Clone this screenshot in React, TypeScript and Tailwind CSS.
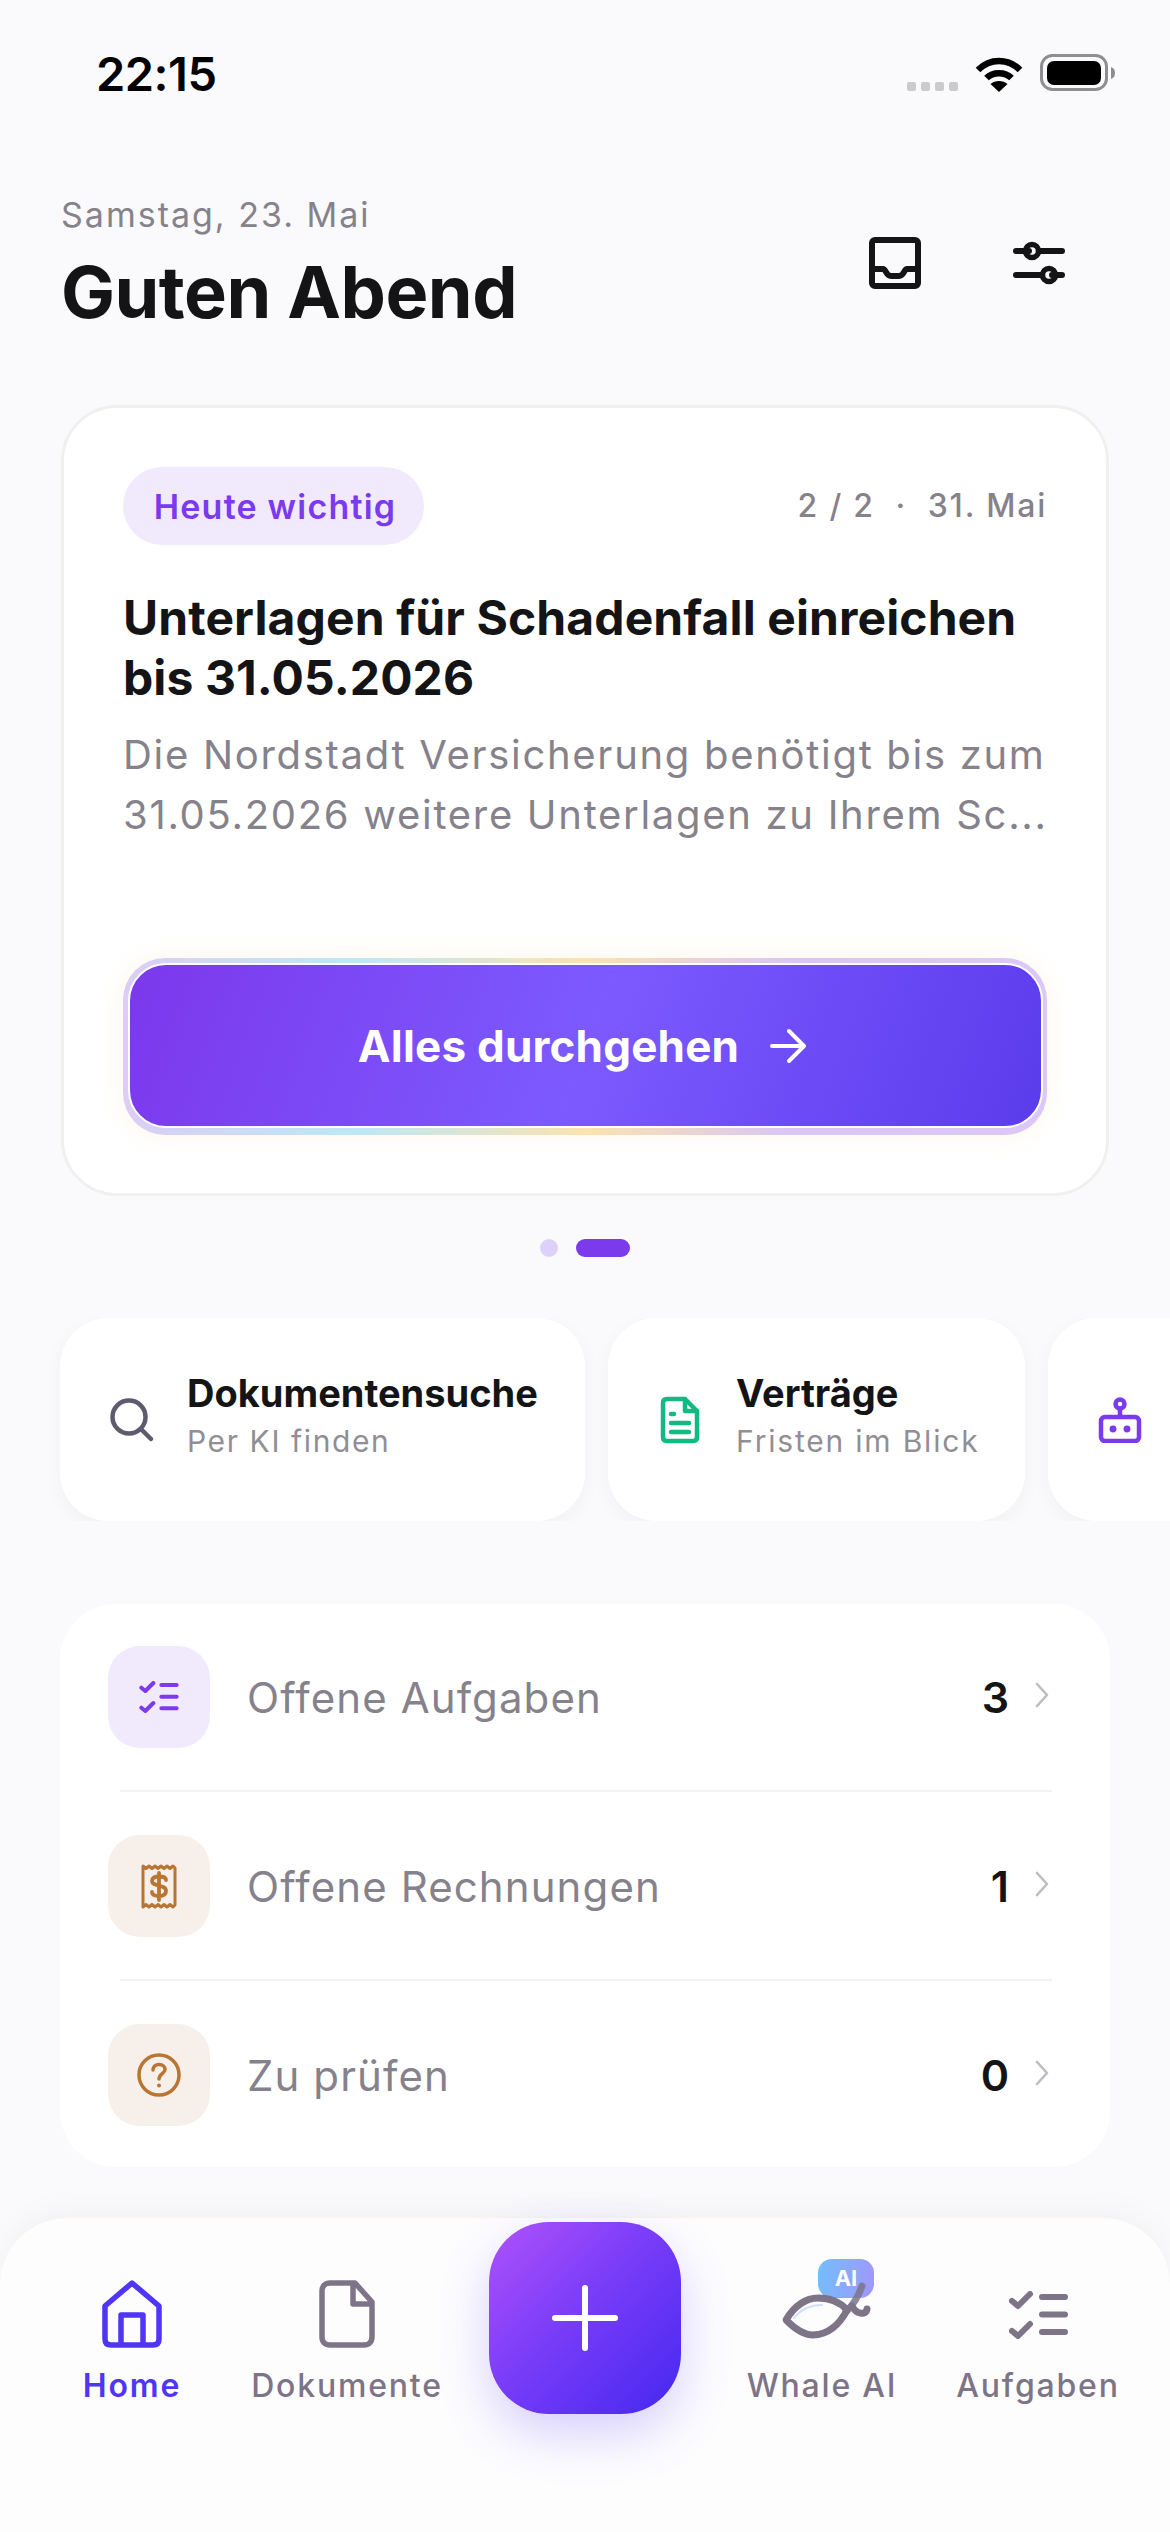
import React from "react";

const font = { fontFamily: "Inter, 'Noto Sans', sans-serif" };

function Wifi() {
  return (
    <svg width="48" height="36" viewBox="0 0 48 36" fill="none" stroke="#000" strokeWidth="6.5">
      <path d="M3 14 C15 2 33 2 45 14" />
      <path d="M11.5 22 C18 15.5 30 15.5 36.5 22" />
      <path d="M24 36 L15.5 28 C20 24 28 24 32.5 28 Z" fill="#000" stroke="none" />
    </svg>
  );
}

function Battery() {
  return (
    <svg width="76" height="38" viewBox="0 0 76 38" fill="none">
      <rect x="1.5" y="1.5" width="65" height="34" rx="11" stroke="#8e8e90" strokeWidth="3" />
      <rect x="7" y="7" width="54" height="24" rx="7" fill="#000" />
      <path d="M71 13 C74 14 75 16 75 19 C75 22 74 24 71 25 Z" fill="#8e8e90" />
    </svg>
  );
}

function Inbox() {
  return (
    <svg width="52" height="52" viewBox="0 0 52 52" fill="none" stroke="#141416" strokeWidth="6" strokeLinejoin="round">
      <rect x="3" y="3" width="46" height="46" rx="3" />
      <path d="M3 32 H14 C17 32 17 39 22 39 H30 C35 39 35 32 38 32 H49" />
    </svg>
  );
}

function Sliders() {
  return (
    <svg width="52" height="46" viewBox="0 0 52 46" fill="none" stroke="#141416" strokeWidth="6" strokeLinecap="round">
      <path d="M3 11 H16 M27 11 H49 M3 35 H28 M39 35 H49" />
      <circle cx="19" cy="11" r="6.5" strokeWidth="5.5" />
      <circle cx="36" cy="35" r="6.5" strokeWidth="5.5" />
    </svg>
  );
}

function SearchIcon() {
  return (
    <svg width="46" height="46" viewBox="0 0 46 46" fill="none" stroke="#5f5a6e" strokeWidth="4.5" strokeLinecap="round">
      <circle cx="20" cy="20" r="16.5" />
      <path d="M32 32 L42 42" />
    </svg>
  );
}

function ContractIcon() {
  return (
    <svg width="40" height="48" viewBox="0 0 40 48" fill="none" stroke="#12b981" strokeWidth="4.5" strokeLinecap="round" strokeLinejoin="round">
      <path d="M25 3 H7 C4.5 3 3 4.5 3 7 V41 C3 43.5 4.5 45 7 45 H33 C35.5 45 37 43.5 37 41 V15 Z" />
      <path d="M25 3 V15 H37" />
      <path d="M11 18 H14 M11 27 H29 M11 36 H29" />
    </svg>
  );
}

function BotIcon() {
  return (
    <svg width="44" height="46" viewBox="0 0 44 46" fill="none" stroke="#7c3aed" strokeWidth="4.5" strokeLinecap="round" strokeLinejoin="round">
      <rect x="3" y="20" width="38" height="24" rx="4" />
      <circle cx="22" cy="7" r="4.5" />
      <path d="M22 12 V20" />
      <circle cx="15" cy="32" r="1.2" fill="#7c3aed" />
      <circle cx="29" cy="32" r="1.2" fill="#7c3aed" />
    </svg>
  );
}

function ChecksIcon({ color, width, height }: { color: string; width: number; height: number }) {
  return (
    <svg width={width} height={height} viewBox="0 0 59 48" fill="none" stroke={color} strokeWidth="6" strokeLinecap="round" strokeLinejoin="round">
      <path d="M3 10 L9 15 L21 3 M3 40 L9 45 L21 33" />
      <path d="M33 6 H56 M33 23.5 H56 M33 41 H56" />
    </svg>
  );
}

function ReceiptIcon() {
  return (
    <svg width="36" height="45" viewBox="0 0 36 45" fill="none" stroke="#b97533" strokeWidth="3" strokeLinecap="round" strokeLinejoin="round">
      <path d="M2 2 L5 4.5 L8 2 L11 4.5 L14 2 L17 4.5 L20 2 L23 4.5 L26 2 L29 4.5 L32 2 L34 4 V41 L32 43 L29 40.5 L26 43 L23 40.5 L20 43 L17 40.5 L14 43 L11 40.5 L8 43 L5 40.5 L2 43 Z" />
      <path d="M25 16 C25 13 22 12.5 18 12.5 C13 12.5 11 14 11 17 C11 23 25 20 25 27 C25 30 23 32 18 32 C14 32 11 31 11 28 M18 9 V36" strokeWidth="3.8" />
    </svg>
  );
}

function QuestionIcon() {
  return (
    <svg width="44" height="44" viewBox="0 0 44 44" fill="none" stroke="#b97533" strokeWidth="3.5" strokeLinecap="round" strokeLinejoin="round">
      <circle cx="22" cy="22" r="20" />
      <path d="M16 17 C16 13.5 19 11.5 22 11.5 C25.5 11.5 28 13.5 28 16.5 C28 20.5 22 21 22 26" />
      <path d="M22 32.5 V32.6" strokeWidth="4" />
    </svg>
  );
}

function Chevron() {
  return (
    <svg width="16" height="26" viewBox="0 0 16 26" fill="none" stroke="#bdbcc0" strokeWidth="2.6" strokeLinecap="round" strokeLinejoin="round">
      <path d="M3 2 L13 13 L3 24" />
    </svg>
  );
}

function HomeIcon() {
  return (
    <svg width="62" height="68" viewBox="0 0 62 68" fill="none" stroke="#5035f5" strokeWidth="5.5" strokeLinejoin="round">
      <path d="M31 3 L58 26 V59 C58 63 56 65 52 65 H10 C6 65 4 63 4 59 V26 Z" />
      <path d="M20 65 V35 H42 V65" />
    </svg>
  );
}

function DocIcon() {
  return (
    <svg width="56" height="68" viewBox="0 0 56 68" fill="none" stroke="#7d7488" strokeWidth="5.5" strokeLinejoin="round">
      <path d="M36 3 H11 C6 3 3 6 3 11 V57 C3 62 6 65 11 65 H45 C50 65 53 62 53 57 V22 Z" />
      <path d="M34 3 V24 H53" />
    </svg>
  );
}

function WhaleIcon() {
  return (
    <svg width="92" height="64" viewBox="0 0 92 64" fill="none" stroke="#7d7488" strokeWidth="7" strokeLinecap="round" strokeLinejoin="round">
      <path d="M14 38 C22 28 32 25 42 25" stroke="#cfe0ff" strokeWidth="2" />
      <path d="M6 40 C14 26 26 18 38 18 C50 18 60 22 67 30 C60 44 48 55 33 55 C22 55 13 47 6 40 Z" />
      <path d="M66 32 C72 26 78 18 82 6" opacity="0.85" />
      <path d="M72 26 C76 34 86 36 87 29" />
    </svg>
  );
}

function PlusIcon() {
  return (
    <svg width="66" height="66" viewBox="0 0 66 66" fill="none" stroke="#fff" strokeWidth="6" strokeLinecap="round">
      <path d="M33 3 V63 M3 33 H63" />
    </svg>
  );
}

function ArrowIcon() {
  return (
    <svg width="38" height="36" viewBox="0 0 38 36" fill="none" stroke="#fff" strokeWidth="4" strokeLinecap="round" strokeLinejoin="round">
      <path d="M3 18 H35 M20 3 L35 18 L20 33" />
    </svg>
  );
}

const rows = [
  { label: "Offene Aufgaben", count: "3", bg: "bg-[#f1eafd]", icon: <ChecksIcon color="#7c3aed" width={40} height={32} /> },
  { label: "Offene Rechnungen", count: "1", bg: "bg-[#f7f0ea]", icon: <ReceiptIcon /> },
  { label: "Zu prüfen", count: "0", bg: "bg-[#f7f0ea]", icon: <QuestionIcon /> },
];

function NavItem({ label, active, icon, className }: { label: string; active?: boolean; icon: React.ReactNode; className: string }) {
  return (
    <div className={`flex flex-col items-center ${className}`}>
      <div className="h-[74px] flex items-end justify-center">{icon}</div>
      <span className={`mt-[18px] text-[32px] leading-[40px] tracking-[1.8px] whitespace-nowrap ${active ? "text-[#5035f5] font-semibold" : "text-[#7d7488] font-medium"}`}>
        {label}
      </span>
    </div>
  );
}

export default function App() {
  return (
    <div style={font} className="relative w-[1170px] h-[2532px] bg-[#fafafc] overflow-hidden flex flex-col">
      {/* Status bar */}
      <div className="h-[92px] pt-[50px] pl-[96px] pr-[54px] flex items-start justify-between">
        <span className="text-[47px] leading-[48px] font-semibold text-black tracking-[-0.5px]">22:15</span>
        <div className="flex items-end gap-[17px] h-[36px] mt-[6px]">
          <div className="flex gap-[5px] pb-[1px]">
            <i className="block w-[9px] h-[9px] rounded-[2px] bg-[#cbcbcd]" />
            <i className="block w-[9px] h-[9px] rounded-[2px] bg-[#cbcbcd]" />
            <i className="block w-[9px] h-[9px] rounded-[2px] bg-[#cbcbcd]" />
            <i className="block w-[9px] h-[9px] rounded-[2px] bg-[#cbcbcd]" />
          </div>
          <Wifi />
          <Battery />
        </div>
      </div>

      {/* Header */}
      <div className="mt-[100px] px-[61px] flex justify-between">
        <div>
          <div className="text-[34px] leading-[46px] text-[#86828c] tracking-[2px]">Samstag, 23. Mai</div>
          <div className="mt-[10px] text-[72px] leading-[88px] font-bold text-[#141416] tracking-[-0.5px]">Guten Abend</div>
        </div>
        <div className="flex gap-[92px] pt-[45px] pr-[44px] items-start">
          <Inbox />
          <div className="mt-[3px]"><Sliders /></div>
        </div>
      </div>

      {/* Main card */}
      <div className="mt-[69px] mx-[61px] h-[791px] rounded-[56px] border-[3px] border-[#f0f0ee] bg-white pt-[59px] px-[59px]">
        <div className="flex items-center justify-between">
          <div className="h-[78px] w-[301px] pl-[3px] rounded-full bg-[#f1eafd] flex items-center justify-center text-[34px] font-semibold text-[#7c3aed] tracking-[1.2px] whitespace-nowrap">
            Heute wichtig
          </div>
          <div className="text-[32px] font-medium text-[#86828c] tracking-[1.8px]">2 / 2 &nbsp;·&nbsp; 31. Mai</div>
        </div>
        <div className="mt-[43px] text-[48px] leading-[60px] font-bold text-[#141416] tracking-[0.1px] whitespace-nowrap">
          Unterlagen für Schadenfall einreichen
          <br />
          bis 31.05.2026
        </div>
        <div className="mt-[17px] text-[40px] leading-[60px] text-[#86828c] tracking-[1.7px] whitespace-nowrap">
          Die Nordstadt Versicherung benötigt bis zum
          <br />
          31.05.2026 weitere Unterlagen zu Ihrem Sc...
        </div>
        <div className="mt-[113px] h-[177px] rounded-[42px] p-[5px_4px_7px_5px] bg-[linear-gradient(90deg,#dccdf6,#bde7f8_25%,#fbe3b0_50%,#d9c6f6_72%,#dcc8f6)] shadow-[0_0_24px_rgba(250,225,170,0.25)]">
          <div className="h-full pr-[6px] rounded-[38px] border-[2px] border-white bg-[linear-gradient(110deg,#7c38ec,#7c5aff_50%,#5b3cec)] flex items-center justify-center gap-[30px]">
            <span className="text-[44px] font-bold text-white tracking-[0.2px]">Alles durchgehen</span>
            <ArrowIcon />
          </div>
        </div>
      </div>

      {/* Page dots */}
      <div className="mt-[43px] flex justify-center gap-[18px]">
        <div className="w-[18px] h-[18px] rounded-full bg-[#dfd0f9]" />
        <div className="w-[54px] h-[18px] rounded-full bg-[#7c3aed]" />
      </div>

      {/* Quick actions */}
      <div className="mt-[61px] pl-[60px] flex gap-[23px] overflow-hidden">
        <div className="shrink-0 w-[525px] h-[203px] rounded-[48px] bg-white shadow-[0_6px_20px_rgba(30,30,60,0.04)] flex items-center pl-[49px] gap-[32px]">
          <SearchIcon />
          <div className="pb-[11px]">
            <div className="mb-[3px] text-[38px] leading-[50px] font-bold text-[#141416]">Dokumentensuche</div>
            <div className="text-[30px] leading-[40px] text-[#918e94] tracking-[1.6px]">Per KI finden</div>
          </div>
        </div>
        <div className="shrink-0 w-[417px] h-[203px] rounded-[48px] bg-white shadow-[0_6px_20px_rgba(30,30,60,0.04)] flex items-center pl-[52px] gap-[36px]">
          <ContractIcon />
          <div className="pb-[11px]">
            <div className="mb-[3px] text-[38px] leading-[50px] font-bold text-[#141416]">Verträge</div>
            <div className="text-[30px] leading-[40px] text-[#918e94] tracking-[1.8px] whitespace-nowrap">Fristen im Blick</div>
          </div>
        </div>
        <div className="shrink-0 w-[417px] h-[203px] rounded-[48px] bg-white shadow-[0_6px_20px_rgba(30,30,60,0.04)] flex items-center pl-[50px]">
          <BotIcon />
        </div>
      </div>

      {/* Task list */}
      <div className="mt-[83px] mx-[60px] h-[563px] rounded-[56px] bg-white pt-[42px] pl-[48px] pr-[58px]">
        {rows.map((row, i) => (
          <div key={row.label}>
            {i > 0 && <div className="ml-[12px] h-[2px] bg-[#f4f3f2] mt-[42px] mb-[43px]" />}
            <div className="h-[102px] flex items-center">
              <div className={`w-[102px] h-[102px] rounded-[32px] flex items-center justify-center ${row.bg}`}>{row.icon}</div>
              <span className="ml-[37px] text-[42px] text-[#86828c] tracking-[1.1px]">{row.label}</span>
              <span className="ml-auto text-[43px] font-semibold text-[#141416]">{row.count}</span>
              <span className="ml-[25px] mr-[2px] mb-[4px]"><Chevron /></span>
            </div>
          </div>
        ))}
      </div>

      {/* Bottom nav */}
      <div className="mt-[49px] flex-1 rounded-t-[68px] bg-[#fdfdfe] shadow-[0_-8px_30px_rgba(30,30,60,0.03)] border-t-[2px] border-[#f7f4f1] relative pt-[56px]">
        <div className="relative h-[132px]">
          <NavItem label="Home" active icon={<HomeIcon />} className="absolute left-[32px] w-[200px]" />
          <NavItem label="Dokumente" icon={<DocIcon />} className="absolute left-[247px] w-[200px]" />
          <NavItem
            label="Whale AI"
            icon={
              <div className="relative w-[100px] h-[74px]">
                <div className="absolute left-[46px] -top-[15px] w-[56px] h-[39px] rounded-[14px] bg-[linear-gradient(100deg,#72bffa,#a196fb)] flex items-center justify-center text-[22px] font-bold text-white">
                  AI
                </div>
                <div className="absolute left-[8px] top-[6px]"><WhaleIcon /></div>
              </div>
            }
            className="absolute left-[722px] w-[200px]"
          />
          <NavItem
            label="Aufgaben"
            icon={<div className="mb-[9px]"><ChecksIcon color="#7d7488" width={59} height={48} /></div>}
            className="absolute left-[938px] w-[200px]"
          />
        </div>
        <div className="absolute left-[489px] top-[4px] w-[192px] h-[192px] rounded-[60px] bg-[linear-gradient(135deg,#b052fa,#7a3df8_45%,#4527f0)] shadow-[0_20px_50px_rgba(80,50,240,0.22)] flex items-center justify-center">
          <PlusIcon />
        </div>
      </div>
    </div>
  );
}
